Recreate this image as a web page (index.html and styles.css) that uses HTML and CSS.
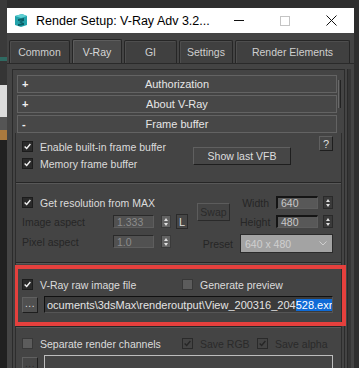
FILE: index.html
```html
<!DOCTYPE html>
<html lang="en">
<head>
    <meta charset="UTF-8">
    <meta name="viewport" content="width=device-width, initial-scale=1.0">
    <title>Render Setup: V-Ray Adv 3.2</title>
    <link rel="stylesheet" href="styles.css">
</head>
<body>

    <div class="screen">
        <!-- bit of the desktop showing behind the dialog -->
        <div class="behind">
            <div class="behind-top"></div>
            <div class="behind-line"></div>
            <div class="behind-mid"></div>
            <div class="behind-light"></div>
            <div class="behind-grey"></div>
            <div class="behind-orange"></div>
            <div class="behind-bottom"></div>
        </div>

        <div class="window">
            <div class="titlebar">
                <svg class="app-icon" viewBox="0 0 14 15" width="14" height="15">
                    <path d="M1 3 L8 1 L13 3 L13 12 L7 14 L1 12 Z" fill="#22a3ab"/>
                    <path d="M1 3 L8 1 L13 3 L7 5 Z" fill="#5fd0d4"/>
                    <path d="M4 6 L10 5 L10 8 L7 9 L10 10 L10 12 L4 13 L4 11 L8 10.5 L5 9 L8 7.5 L4 8 Z" fill="#0b5d66"/>
                </svg>
                <span class="title">Render Setup: V-Ray Adv 3.2...</span>
                <span class="caption"><span class="min-line"></span></span>
                <span class="caption"><span class="max-box"></span></span>
                <span class="caption">
                    <svg class="close-x" viewBox="0 0 11 11" width="11" height="11">
                        <path d="M0.5 0.5 L10.5 10.5 M10.5 0.5 L0.5 10.5" stroke="#111" stroke-width="1"/>
                    </svg>
                </span>
            </div>

            <div class="tabs">
                <div class="tab tab-common">Common</div>
                <div class="tab tab-vray active">V-Ray</div>
                <div class="tab tab-gi">GI</div>
                <div class="tab tab-settings">Settings</div>
                <div class="tab tab-elements">Render Elements</div>
            </div>

            <div class="pane">
                <div class="scroll">
                    <div class="scroll-thumb"></div>

                    <div class="bar"><span class="sign">+</span><span class="bar-title">Authorization</span></div>
                    <div class="bar"><span class="sign">+</span><span class="bar-title">About V-Ray</span></div>
                    <div class="bar open"><span class="sign">-</span><span class="bar-title">Frame buffer</span></div>

                    <div class="rollout-body">
                        <div class="fb-top">
                            <div class="fb-checks">
                                <div class="check">
                                    <span class="box on"><svg viewBox="0 0 11 11"><polyline points="2,5.5 4.5,8 9,2.5"/></svg></span>
                                    Enable built-in frame buffer
                                </div>
                                <div class="check">
                                    <span class="box on"><svg viewBox="0 0 11 11"><polyline points="2,5.5 4.5,8 9,2.5"/></svg></span>
                                    Memory frame buffer
                                </div>
                            </div>
                            <div class="btn btn-vfb">Show last VFB</div>
                            <div class="btn btn-help">?</div>
                        </div>

                        <div class="sep"></div>

                        <div class="res">
                            <div class="check res-get">
                                <span class="box on"><svg viewBox="0 0 11 11"><polyline points="2,5.5 4.5,8 9,2.5"/></svg></span>
                                Get resolution from MAX
                            </div>
                            <div class="field-row aspect-row">
                                <span class="field-label">Image aspect</span>
                                <span class="num num-off">1.333</span>
                                <span class="spin"><i class="up"></i><i class="dn"></i></span>
                                <div class="btn btn-l">L</div>
                            </div>
                            <div class="field-row pixel-row">
                                <span class="field-label">Pixel aspect</span>
                                <span class="num num-off">1.0</span>
                                <span class="spin"><i class="up"></i><i class="dn"></i></span>
                            </div>
                            <div class="btn btn-swap">Swap</div>

                            <span class="side-label lbl-width">Width</span>
                            <span class="num num-on in-width">640</span>
                            <span class="spin spin-dark spin-width"><i class="up"></i><i class="dn"></i></span>

                            <span class="side-label lbl-height">Height</span>
                            <span class="num num-on in-height">480</span>
                            <span class="spin spin-dark spin-height"><i class="up"></i><i class="dn"></i></span>

                            <span class="side-label lbl-preset">Preset</span>
                            <div class="preset">
                                <span>640 x 480</span>
                                <svg viewBox="0 0 8 5" width="8" height="5"><polyline points="0.5,0.5 4,4 7.5,0.5"/></svg>
                            </div>
                        </div>

                        <div class="sep"></div>

                        <div class="raw">
                            <div class="raw-row">
                                <div class="check check-wide">
                                    <span class="box on"><svg viewBox="0 0 11 11"><polyline points="2,5.5 4.5,8 9,2.5"/></svg></span>
                                    V-Ray raw image file
                                </div>
                                <div class="check">
                                    <span class="box off"></span>
                                    Generate preview
                                </div>
                            </div>
                            <div class="path-row">
                                <div class="btn dots">...</div>
                                <div class="path">
                                    <span class="path-text">ocuments\3dsMax\renderoutput\View_200316_204<span class="selected">528.exr</span></span>
                                    <span class="caret"></span>
                                </div>
                            </div>
                            <div class="mark"></div>
                        </div>

                        <div class="sep"></div>

                        <div class="channels">
                            <div class="raw-row">
                                <div class="check check-wide">
                                    <span class="box off"></span>
                                    Separate render channels
                                </div>
                                <div class="check check-off check-rgb">
                                    <span class="box dim"><svg viewBox="0 0 11 11"><polyline points="2,5.5 4.5,8 9,2.5"/></svg></span>
                                    Save RGB
                                </div>
                                <div class="check check-off">
                                    <span class="box dim"><svg viewBox="0 0 11 11"><polyline points="2,5.5 4.5,8 9,2.5"/></svg></span>
                                    Save alpha
                                </div>
                            </div>
                            <div class="path-row">
                                <div class="btn dots dots-off">...</div>
                                <div class="path path-off"></div>
                            </div>
                        </div>
                    </div>
                </div>
                <div class="track"></div>
            </div>
        </div>
    </div>

</body>
</html>
```

FILE: styles.css
```css
* {
    box-sizing: border-box;
}

body {
    margin: 0;
    width: 359px;
    height: 368px;
    overflow: hidden;
    background-color: #2e2e2e;
    font-family: 'Liberation Sans', Arial, sans-serif;
    font-size: 10.5px;
    color: #dcdcdc;
}

.screen {
    display: flex;
    align-items: flex-start;
    height: 368px;
}

/* desktop behind */
.behind {
    width: 7px;
    height: 368px;
    display: flex;
    flex-direction: column;
    flex-shrink: 0;
}

.behind-top { height: 57px; background-color: #3a3a3a; }
.behind-line { height: 4px; background-color: #2f6a62; }
.behind-mid { height: 24px; background-color: #353535; }
.behind-light { height: 32px; background-color: #dcdcdc; }
.behind-grey { height: 13px; background-color: #555; }
.behind-orange { height: 10px; background-color: #a9793e; }
.behind-bottom { flex: 1; background-color: #202020; }

/* dialog */
.window {
    width: 347px;
    height: 360px;
    margin-top: 8px;
    background-color: #444;
    display: flex;
    flex-direction: column;
    flex-shrink: 0;
}

.titlebar {
    height: 25px;
    background-color: #fff;
    display: flex;
    align-items: center;
    color: #000;
    font-size: 12.5px;
    flex-shrink: 0;
}

.app-icon {
    margin-left: 7px;
    margin-right: 8px;
}

.title {
    flex: 1;
    white-space: nowrap;
}

.caption {
    width: 46px;
    height: 25px;
    display: flex;
    align-items: center;
    justify-content: center;
}

.min-line {
    width: 10px;
    height: 1px;
    background-color: #111;
}

.max-box {
    width: 10px;
    height: 10px;
    border: 1px solid #c4c4c4;
}

/* tabs */
.tabs {
    height: 31px;
    display: flex;
    align-items: flex-end;
    gap: 2px;
    padding-left: 2px;
    border-bottom: 1px solid #2a2a2a;
    flex-shrink: 0;
}

.tab {
    height: 23px;
    display: flex;
    align-items: center;
    justify-content: center;
    background-color: #404040;
    border: 1px solid #262626;
    border-bottom: none;
    border-radius: 2px 2px 0 0;
    box-shadow: inset 1px 1px 0 #4e4e4e;
    color: #cfcfcf;
}

.tab.active {
    height: 24px;
    background-color: #4a4a4a;
    box-shadow: inset 1px 1px 0 #5c5c5c;
    color: #d8d8d8;
}

.tab-common { width: 61px; }
.tab-vray { width: 50px; }
.tab-gi { width: 53px; }
.tab-settings { width: 54px; }
.tab-elements { width: 115px; }

/* pane with rollouts */
.pane {
    flex: 1;
    display: flex;
    padding: 5px 0 0 5px;
}

.scroll {
    position: relative;
    width: 333px;
    border: 1px solid #2b2b2b;
    border-bottom: none;
    padding-top: 5px;
}

.scroll-thumb {
    position: absolute;
    top: 10px;
    right: 3px;
    width: 3px;
    height: 28px;
    border-left: 1px solid #6a6a6a;
    border-right: 1px solid #222;
}

.track {
    width: 4px;
    margin-left: 2px;
    background-color: #363636;
    border-left: 1px solid #2a2a2a;
}

.bar {
    width: 320px;
    height: 18px;
    margin: 0 0 2px 4px;
    display: grid;
    grid-template-columns: 16px 1fr 16px;
    align-items: center;
    background-color: #474747;
    border: 1px solid #636363;
    color: #e6e6e6;
    font-size: 11px;
}

.bar.open {
    margin-bottom: 0;
}

.sign {
    padding-left: 4px;
    font-weight: bold;
    font-size: 11px;
    color: #f0f0f0;
}

.bar-title {
    text-align: center;
}

.rollout-body {
    width: 327px;
    margin-left: 2px;
    border-left: 1px solid #2d2d2d;
    border-right: 1px solid #2d2d2d;
}

.sep {
    height: 2px;
    border-top: 1px solid #262626;
    border-bottom: 1px solid #585858;
}

/* checkboxes */
.check {
    height: 17px;
    display: flex;
    align-items: center;
    gap: 7px;
    white-space: nowrap;
}

.box {
    width: 11px;
    height: 11px;
    flex-shrink: 0;
    border: 1px solid #1c1c1c;
    display: flex;
}

.box svg {
    width: 9px;
    height: 9px;
    fill: none;
    stroke: #f2f2f2;
    stroke-width: 1.7;
}

.box.on {
    background-color: #2a2a2a;
}

.box.off {
    background-color: #5c5c5c;
    border-color: #383838;
}

.box.dim {
    background-color: #444;
    border-color: #2a2a2a;
}

.box.dim svg {
    stroke: #262626;
}

.check-off {
    color: #2a2a2a;
}

.check-wide {
    width: 160px;
}

.check-rgb {
    width: 75px;
}

/* buttons */
.btn {
    display: flex;
    align-items: center;
    justify-content: center;
    background-color: #464646;
    border: 1px solid;
    border-color: #606060 #1e1e1e #1e1e1e #606060;
    color: #dedede;
}

/* frame buffer top block */
.fb-top {
    height: 49px;
    display: flex;
    align-items: flex-start;
    padding: 5px 0 0 6px;
}

.fb-checks {
    width: 171px;
}

.btn-vfb {
    width: 98px;
    height: 18px;
    margin-top: 9px;
}

.btn-help {
    width: 14px;
    height: 15px;
    margin-left: 28px;
    margin-top: -2px;
    font-size: 11px;
}

/* resolution block */
.res {
    height: 78px;
    padding: 12px 0 0 6px;
    display: grid;
    grid-template-columns: 175px 36px 7px 29px 7px 42px 5px 10px;
    grid-template-rows: 13px 13px 19px;
    row-gap: 6px;
    align-items: center;
}

.res-get { grid-column: 1; grid-row: 1; }

.field-row {
    display: flex;
    align-items: center;
}

.aspect-row { grid-column: 1; grid-row: 2; }

.pixel-row {
    grid-column: 1;
    grid-row: 3;
    align-self: start;
    margin-top: 1px;
}

.field-label {
    width: 91px;
    color: #262626;
}

.num {
    height: 13px;
    display: flex;
    align-items: center;
    padding-left: 3px;
    border: 1px solid;
    font-size: 10.5px;
}

.num-off {
    width: 41px;
    background-color: #515151;
    border-color: #2a2a2a #5e5e5e #5e5e5e #2a2a2a;
    color: #8c8c8c;
}

.num-on {
    background-color: #585858;
    border-color: #151515 #5e5e5e #5e5e5e #151515;
    border-width: 2px 1px 1px 2px;
    color: #c8c8c8;
}

.spin {
    width: 10px;
    height: 13px;
    margin-left: 7px;
    background-color: #636363;
    border: 1px solid #3a3a3a;
    display: flex;
    flex-direction: column;
    align-items: center;
    justify-content: center;
    gap: 2px;
}

.spin-dark {
    margin-left: 0;
    background-color: #3a3a3a;
    border-color: #2a2a2a;
}

.spin .up {
    border-left: 2.5px solid transparent;
    border-right: 2.5px solid transparent;
    border-bottom: 3px solid #e0e0e0;
}

.spin .dn {
    border-left: 2.5px solid transparent;
    border-right: 2.5px solid transparent;
    border-top: 3px solid #e0e0e0;
}

.btn-l {
    width: 12px;
    height: 15px;
    margin-left: 5px;
    font-size: 11px;
    border-color: #2a2a2a;
}

.btn-swap {
    grid-column: 2;
    grid-row: 1 / 3;
    width: 33px;
    height: 18px;
    color: #2a2a2a;
    border-color: #5c5c5c #2a2a2a #2a2a2a #5c5c5c;
    background-color: #444;
}

.side-label {
    text-align: right;
    color: #262626;
}

.lbl-width { grid-column: 4; grid-row: 1; }
.in-width { grid-column: 6; grid-row: 1; }
.spin-width { grid-column: 8; grid-row: 1; }

.lbl-height { grid-column: 4; grid-row: 2; }
.in-height { grid-column: 6; grid-row: 2; }
.spin-height { grid-column: 8; grid-row: 2; }

.lbl-preset { grid-column: 2; grid-row: 3; }

.preset {
    grid-column: 4 / 9;
    grid-row: 3;
    height: 19px;
    display: flex;
    align-items: center;
    justify-content: space-between;
    padding: 0 5px 0 4px;
    background-color: #a3a3a3;
    border: 1px solid #2a2a2a;
    color: #cfcfcf;
}

.preset svg {
    fill: none;
    stroke: #cfcfcf;
    stroke-width: 1;
}

/* raw image file block */
.raw {
    position: relative;
    height: 62px;
    padding: 12px 0 0 6px;
}

.raw-row {
    display: flex;
    align-items: center;
    height: 17px;
}

.path-row {
    display: flex;
    align-items: flex-start;
    margin-top: 3px;
}

.dots {
    width: 16px;
    height: 16px;
    margin-top: 1px;
    padding-bottom: 3px;
    background-color: #505050;
    font-size: 10px;
    letter-spacing: 0.5px;
}

.path {
    width: 289px;
    height: 17px;
    margin-left: 6px;
    display: flex;
    align-items: center;
    padding-left: 2px;
    background-color: #3a3a3a;
    border: 1px solid;
    border-color: #111 #555 #555 #111;
    overflow: hidden;
    white-space: nowrap;
    font-size: 11px;
    color: #e4e4e4;
}

.selected {
    background-color: #0f6bd6;
    color: #fff;
}

.caret {
    width: 1px;
    height: 13px;
    background-color: #fff;
}

.mark {
    position: absolute;
    top: 1px;
    left: -1px;
    right: -5px;
    bottom: 0;
    border: 4px solid #e5403d;
    border-left-width: 3px;
}

/* render channels */
.channels {
    padding: 7px 0 0 6px;
}

.dots-off {
    color: #2a2a2a;
    background-color: #464646;
    margin-top: 2px;
}

.path-off {
    background-color: #444;
    border: 1px solid #bdbdbd;
}
```
